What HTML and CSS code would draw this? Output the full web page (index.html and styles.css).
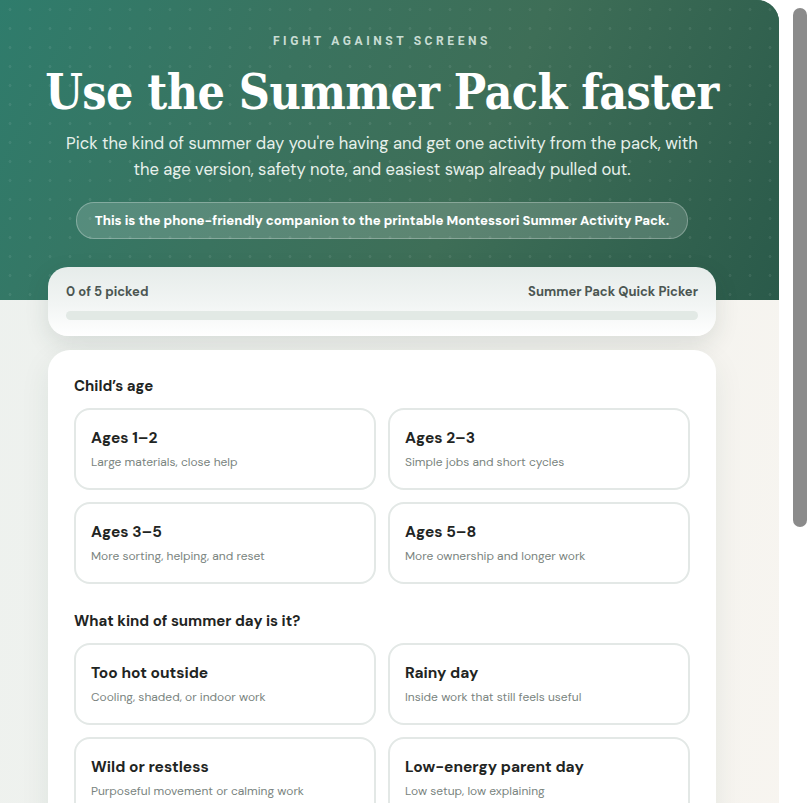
FILE: index.html
```html
<!DOCTYPE html>
<html lang="en">
<head>
    <meta charset="UTF-8">
    <meta name="viewport" content="width=device-width, initial-scale=1.0">
    <title>Summer Pack Quick Picker</title>
    <link rel="stylesheet" href="styles.css">
</head>
<body>
    <div class="page">
        <header class="hero">
            <p class="eyebrow">FIGHT AGAINST SCREENS</p>
            <h1>Use the Summer Pack faster</h1>
            <p class="lead">Pick the kind of summer day you're having and get one activity from the pack, with the age version, safety note, and easiest swap already pulled out.</p>
            <div class="pill">This is the phone-friendly companion to the printable Montessori Summer Activity Pack.</div>
        </header>

        <main class="content">
            <div class="progress-card">
                <div class="progress-head">
                    <span id="picked-count">0 of 5 picked</span>
                    <span>Summer Pack Quick Picker</span>
                </div>
                <div class="progress-track"><div class="progress-fill" style="width: 0%"></div></div>
            </div>

            <section class="picker-card">
                <h2 class="step-title">Child’s age</h2>
                <div class="options">
                    <button class="option" data-group="age">
                        <span class="option-title">Ages 1–2</span>
                        <span class="option-sub">Large materials, close help</span>
                    </button>
                    <button class="option" data-group="age">
                        <span class="option-title">Ages 2–3</span>
                        <span class="option-sub">Simple jobs and short cycles</span>
                    </button>
                    <button class="option" data-group="age">
                        <span class="option-title">Ages 3–5</span>
                        <span class="option-sub">More sorting, helping, and reset</span>
                    </button>
                    <button class="option" data-group="age">
                        <span class="option-title">Ages 5–8</span>
                        <span class="option-sub">More ownership and longer work</span>
                    </button>
                </div>

                <h2 class="step-title">What kind of summer day is it?</h2>
                <div class="options">
                    <button class="option" data-group="day">
                        <span class="option-title">Too hot outside</span>
                        <span class="option-sub">Cooling, shaded, or indoor work</span>
                    </button>
                    <button class="option" data-group="day">
                        <span class="option-title">Rainy day</span>
                        <span class="option-sub">Inside work that still feels useful</span>
                    </button>
                    <button class="option" data-group="day">
                        <span class="option-title">Wild or restless</span>
                        <span class="option-sub">Purposeful movement or calming work</span>
                    </button>
                    <button class="option" data-group="day">
                        <span class="option-title">Low-energy parent day</span>
                        <span class="option-sub">Low setup, low explaining</span>
                    </button>
                </div>

                <h2 class="step-title">Where will it happen?</h2>
                <div class="options">
                    <button class="option" data-group="place">
                        <span class="option-title">Kitchen</span>
                        <span class="option-sub">Water, food prep, and cleanup</span>
                    </button>
                    <button class="option" data-group="place">
                        <span class="option-title">Outside</span>
                        <span class="option-sub">Garden, yard, or balcony</span>
                    </button>
                    <button class="option" data-group="place">
                        <span class="option-title">Living room</span>
                        <span class="option-sub">Floor work and small trays</span>
                    </button>
                    <button class="option" data-group="place">
                        <span class="option-title">Anywhere</span>
                        <span class="option-sub">Portable and quick to reset</span>
                    </button>
                </div>
            </section>
        </main>
    </div>

    <!-- drawn scrollbar, the headless shot hides the real one -->
    <div class="scroll-thumb"></div>
</body>
</html>
```

FILE: styles.css
```css
html {
    background: #fff;
}

body {
    margin: 0;
    background: #fff;
    font-family: "DM Sans", Lato, "Noto Sans", sans-serif;
    color: #1f2523;
}

.scroll-thumb {
    position: fixed;
    top: 8px;
    right: 2px;
    width: 14px;
    height: 519px;
    border-radius: 7px;
    background: #8b8b8b;
}

.page {
    width: 779px;
    border-top-right-radius: 22px;
    overflow: hidden;
    background: linear-gradient(100deg, #edf1ee 0%, #f3f3ef 60%, #f8f5f0 100%);
}

/* hero */
.hero {
    height: 300px;
    box-sizing: border-box;
    padding: 34px 45px 0 30px;
    text-align: center;
    color: #fff;
    background-color: #336d5c;
    background-image:
        radial-gradient(rgba(255, 255, 255, 0.07) 1.2px, transparent 1.8px),
        linear-gradient(115deg, #2f7c6c 0%, #3a735f 35%, #3e6e57 60%, #2a5a4a 100%);
    background-size: 20px 19px, 100% 100%;
}

.eyebrow {
    margin: 0;
    font-family: Roboto, "Noto Sans", sans-serif;
    font-size: 12px;
    font-weight: 700;
    letter-spacing: 3.6px;
    color: #c9ddd4;
}

h1 {
    margin: 16px 0 0;
    font-family: "DejaVu Serif Condensed", "DejaVu Serif", serif;
    font-size: 48px;
    line-height: 56px;
    font-weight: 700;
    letter-spacing: -0.6px;
}

.lead {
    margin: 11px auto 0;
    max-width: 660px;
    font-size: 16.6px;
    line-height: 26px;
    color: #e7f0eb;
}

.pill {
    display: inline-block;
    margin-top: 19px;
    padding: 10px 18px;
    font-size: 13.2px;
    font-weight: 800;
    line-height: 15px;
    border: 1px solid rgba(255, 255, 255, 0.28);
    border-radius: 18px;
    background: rgba(255, 255, 255, 0.16);
}

/* content */
.content {
    padding: 0 63px 40px 48px;
    margin-top: -33px;
}

.progress-card {
    padding: 17px 18px 16px;
    border-radius: 20px;
    background: linear-gradient(180deg, #e6ecea 0%, #f2f5f4 55%, #fff 100%);
    box-shadow: 0 8px 24px rgba(30, 60, 50, 0.12);
}

.progress-head {
    display: flex;
    justify-content: space-between;
    font-size: 13px;
    font-weight: 700;
    line-height: 16px;
    color: #4b5652;
}

.progress-track {
    margin-top: 11px;
    height: 9px;
    border-radius: 5px;
    background: #e2e9e5;
}

.progress-fill {
    height: 100%;
    border-radius: 5px;
    background: #2f7c6c;
}

.picker-card {
    margin-top: 14px;
    padding: 26px 26px 30px;
    border-radius: 22px;
    background: #fff;
    box-shadow: 0 10px 30px rgba(30, 60, 50, 0.08);
}

.step-title {
    margin: 0 0 12px;
    font-size: 15px;
    line-height: 20px;
    font-weight: 700;
    color: #1f2523;
}

.options {
    display: grid;
    grid-template-columns: 1fr 1fr;
    gap: 12px;
    margin-bottom: 27px;
}

.option {
    display: flex;
    flex-direction: column;
    gap: 6px;
    padding: 18px 15px;
    text-align: left;
    font-family: inherit;
    background: #fff;
    border: 2px solid #e3e8e6;
    border-radius: 16px;
    cursor: pointer;
}

.option-title {
    font-size: 15.5px;
    line-height: 20px;
    font-weight: 700;
    color: #1f2523;
}

.option-sub {
    font-size: 12px;
    line-height: 16px;
    color: #7a8480;
}
```
